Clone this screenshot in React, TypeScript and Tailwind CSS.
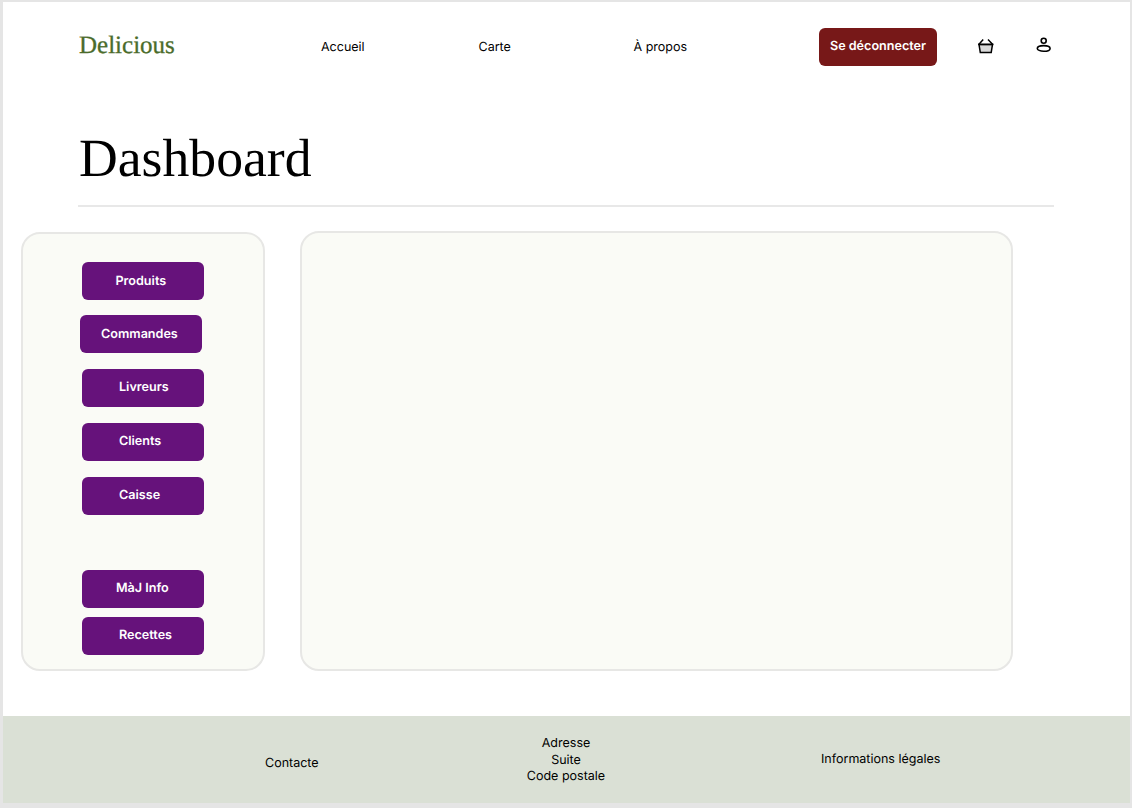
const menu = [
  { label: "Produits", box: "mt-0", text: "pl-[33.5px] pt-[2px]" },
  { label: "Commandes", box: "mt-[15px] -ml-[2px]", text: "pl-[21px] pt-[2px]" },
  { label: "Livreurs", box: "mt-[16px]", text: "pl-[37px] pt-px" },
  { label: "Clients", box: "mt-[16px]", text: "pl-[37px] pt-px" },
  { label: "Caisse", box: "mt-[16px]", text: "pl-[37px] pt-px" },
  { label: "MàJ Info", box: "mt-[55px]", text: "pl-[34px] pt-px" },
  { label: "Recettes", box: "mt-[9px]", text: "pl-[37px] pt-px" },
];

function BasketIcon() {
  return (
    <svg className="mt-[36px] h-[18px] w-[18px]" viewBox="0 0 18 18" fill="none" stroke="#000" strokeWidth="1.5">
      <path d="M2 6.4 L3.3 14.6 H14.2 L15.5 6.4 Z" fill="#d9d9d9" />
      <path d="M1.1 6.4 H16.4" />
      <path d="M2 6.2 L6.2 1.6 M15.5 6.2 L11 1.6" />
    </svg>
  );
}

function UserIcon() {
  return (
    <svg className="mt-[35px] h-[18px] w-[16px]" viewBox="0 0 16 18" fill="none" stroke="#000" strokeWidth="1.6">
      <circle cx="7.7" cy="3.7" r="2.5" />
      <ellipse cx="7.7" cy="11.4" rx="6.4" ry="2.8" />
    </svg>
  );
}

export default function App() {
  return (
    <div className="h-[808px] w-[1132px] overflow-hidden bg-[#e5e5e5] pl-[3px] pt-[2px] font-['Inter',sans-serif] text-[12.5px] leading-[16.5px] text-black [text-rendering:geometricPrecision]">
      <div className="flex h-[801px] w-[1127px] flex-col bg-white">
        <header className="grid h-[90px] shrink-0 grid-cols-[242px_157.5px_155px_185.5px_158px_58.5px_1fr] pl-[76px]">
          <a className="pt-[29px] font-['Liberation_Serif',serif] text-[25px] leading-[30px] text-[#4b6c2b] [-webkit-text-stroke:0.3px_#4b6c2b]">Delicious</a>
          <a className="pt-[38px]">Accueil</a>
          <a className="pt-[38px]">Carte</a>
          <a className="pt-[38px]">À propos</a>
          <button className="mt-[26px] h-[38px] w-[118px] rounded-[6px] bg-[#771818] pt-px text-[12.6px] font-semibold text-white [text-rendering:geometricPrecision]">
            Se déconnecter
          </button>
          <BasketIcon />
          <UserIcon />
        </header>

        <h1 className="ml-[76px] mt-[36px] h-[75px] w-[976px] shrink-0 font-['Liberation_Serif',serif] text-[53.7px] leading-[60px]">
          Dashboard
        </h1>
        <hr className="ml-[75px] mt-[2px] h-[2px] w-[976px] shrink-0 border-0 bg-[#e8e8e8]" />

        <main className="flex items-start gap-[35px] pl-[18px] pt-[24px]">
          <nav className="mt-[1px] h-[439px] w-[244px] rounded-[19px] border-2 border-[#e7e7e5] bg-[#fafbf6] pl-[59px] pt-[28px]">
            {menu.map((item) => (
              <button
                key={item.label}
                className={`block h-[38px] w-[122px] rounded-[6px] bg-[#66127b] text-left text-[12.6px] font-semibold text-white [text-rendering:geometricPrecision] ${item.box} ${item.text}`}
              >
                {item.label}
              </button>
            ))}
          </nav>
          <section className="h-[440px] w-[713px] rounded-[19px] border-2 border-[#e7e7e5] bg-[#fafbf6]" />
        </main>

        <footer className="mt-auto grid h-[87px] shrink-0 grid-cols-[242px_118px_196px_1fr] bg-[#dae0d5] pl-[262px]">
          <a className="pt-[40px]">Contacte</a>
          <address className="pt-[20px] text-center not-italic">
            Adresse
            <br />
            Suite
            <br />
            Code postale
          </address>
          <span />
          <a className="pt-[36px]">Informations légales</a>
        </footer>
      </div>
    </div>
  );
}
